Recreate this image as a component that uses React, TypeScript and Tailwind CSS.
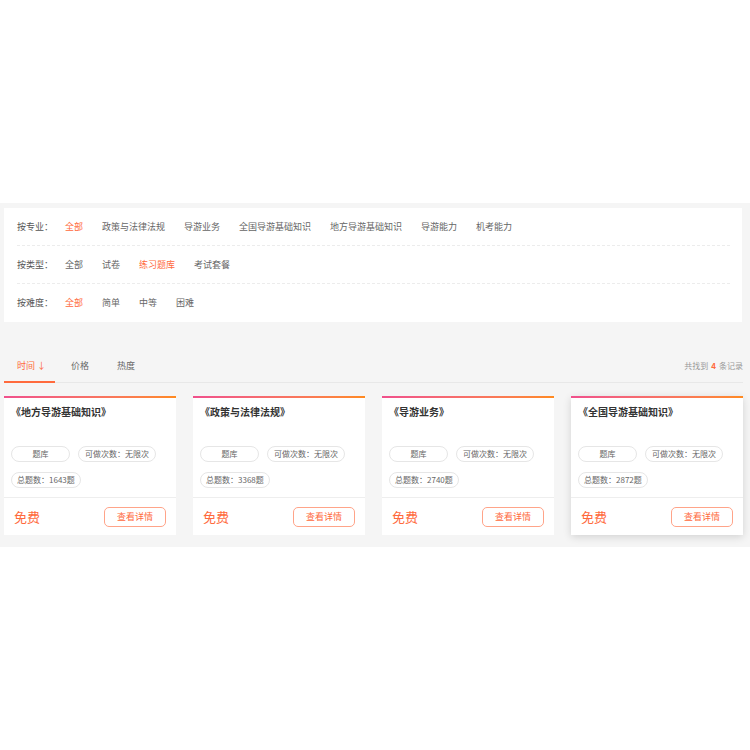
import React from 'react';

const font = { fontFamily: '"Noto Sans CJK SC", "Noto Sans", sans-serif' };

const filters = [
  { label: '按专业：', items: ['全部', '政策与法律法规', '导游业务', '全国导游基础知识', '地方导游基础知识', '导游能力', '机考能力'], active: 0 },
  { label: '按类型：', items: ['全部', '试卷', '练习题库', '考试套餐'], active: 2 },
  { label: '按难度：', items: ['全部', '简单', '中等', '困难'], active: 0 },
];

const cards = [
  { title: '《地方导游基础知识》', total: 1643 },
  { title: '《政策与法律法规》', total: 3368 },
  { title: '《导游业务》', total: 2740 },
  { title: '《全国导游基础知识》', total: 2872, hover: true },
];

function Card({ title, total, hover }: { title: string; total: number; hover?: boolean }) {
  return (
    <div className={`bg-white flex flex-col ${hover ? 'shadow-[0_2px_8px_rgba(0,0,0,0.14)]' : ''}`}>
      <div className="h-[2px] bg-gradient-to-r from-[#f0508c] to-[#ff8a1e]" />
      <div className="px-[7px] pt-[7px] pb-[9px]">
        <div className="text-[10px] leading-[14px] font-bold text-[#333]">{title}</div>
        <div className="mt-[27px] flex gap-[8px]">
          <span className="w-[59px] h-[16px] rounded-full border border-[#e6e6e6] text-[8px] leading-[14px] text-[#666] text-center">题库</span>
          <span className="h-[16px] px-[6px] rounded-full border border-[#e6e6e6] text-[8px] leading-[14px] text-[#666]">可做次数：无限次</span>
        </div>
        <div className="mt-[10px] flex">
          <span className="h-[16px] px-[5px] rounded-full border border-[#e6e6e6] text-[8px] leading-[14px] text-[#666]">总题数：{total}题</span>
        </div>
      </div>
      <div className="border-t border-[#eeeeee] h-[38px] flex items-center justify-between pl-[10px] pr-[10px]">
        <span className="text-[13px] text-[#ff6a3d]">免费</span>
        <button className="w-[62px] h-[20px] rounded-[5px] border border-[#ffa489] text-[9px] text-[#ff6a3d] leading-none">查看详情</button>
      </div>
    </div>
  );
}

export default function App() {
  return (
    <div className="bg-white h-[750px] w-[750px]" style={font}>
      <div className="h-[203px]" />
      <div className="bg-[#f5f5f5] h-[344px] pl-[4px] pr-[7px] pt-[5px]">
        {/* filter panel */}
        <div className="bg-white pl-[13px] pr-[12px] mr-[1px]">
          {filters.map((f, i) => (
            <div
              key={f.label}
              className={`h-[38px] flex items-center text-[9px] ${i < filters.length - 1 ? 'border-b border-dashed border-[#ececec]' : ''}`}
            >
              <span className="text-[#555] w-[48px]">{f.label}</span>
              <div className="flex gap-[19px]">
                {f.items.map((it, j) => (
                  <span key={it} className={j === f.active ? 'text-[#ff6a3d]' : 'text-[#666]'}>{it}</span>
                ))}
              </div>
            </div>
          ))}
        </div>

        {/* sort tabs */}
        <div className="mt-[28px] flex items-end justify-between border-b border-[#e8e8e8] h-[33px]">
          <div className="flex h-full text-[9px]">
            <div className="flex items-center pl-[13px] pr-[9px] border-b-2 border-[#ff6a3d] -mb-px text-[#ff6a3d]">时间 ↓</div>
            <div className="flex items-center pl-[16px] pr-[14px] text-[#666]">价格</div>
            <div className="flex items-center pl-[14px] text-[#666]">热度</div>
          </div>
          <div className="h-full flex items-center text-[8px] text-[#999]">
            共找到<span className="mx-[3px] text-[#ff6a3d] font-bold">4</span>条记录
          </div>
        </div>

        {/* cards */}
        <div className="mt-[13px] grid grid-cols-4 gap-[17px]">
          {cards.map((c) => (
            <Card key={c.title} {...c} />
          ))}
        </div>
      </div>
    </div>
  );
}
